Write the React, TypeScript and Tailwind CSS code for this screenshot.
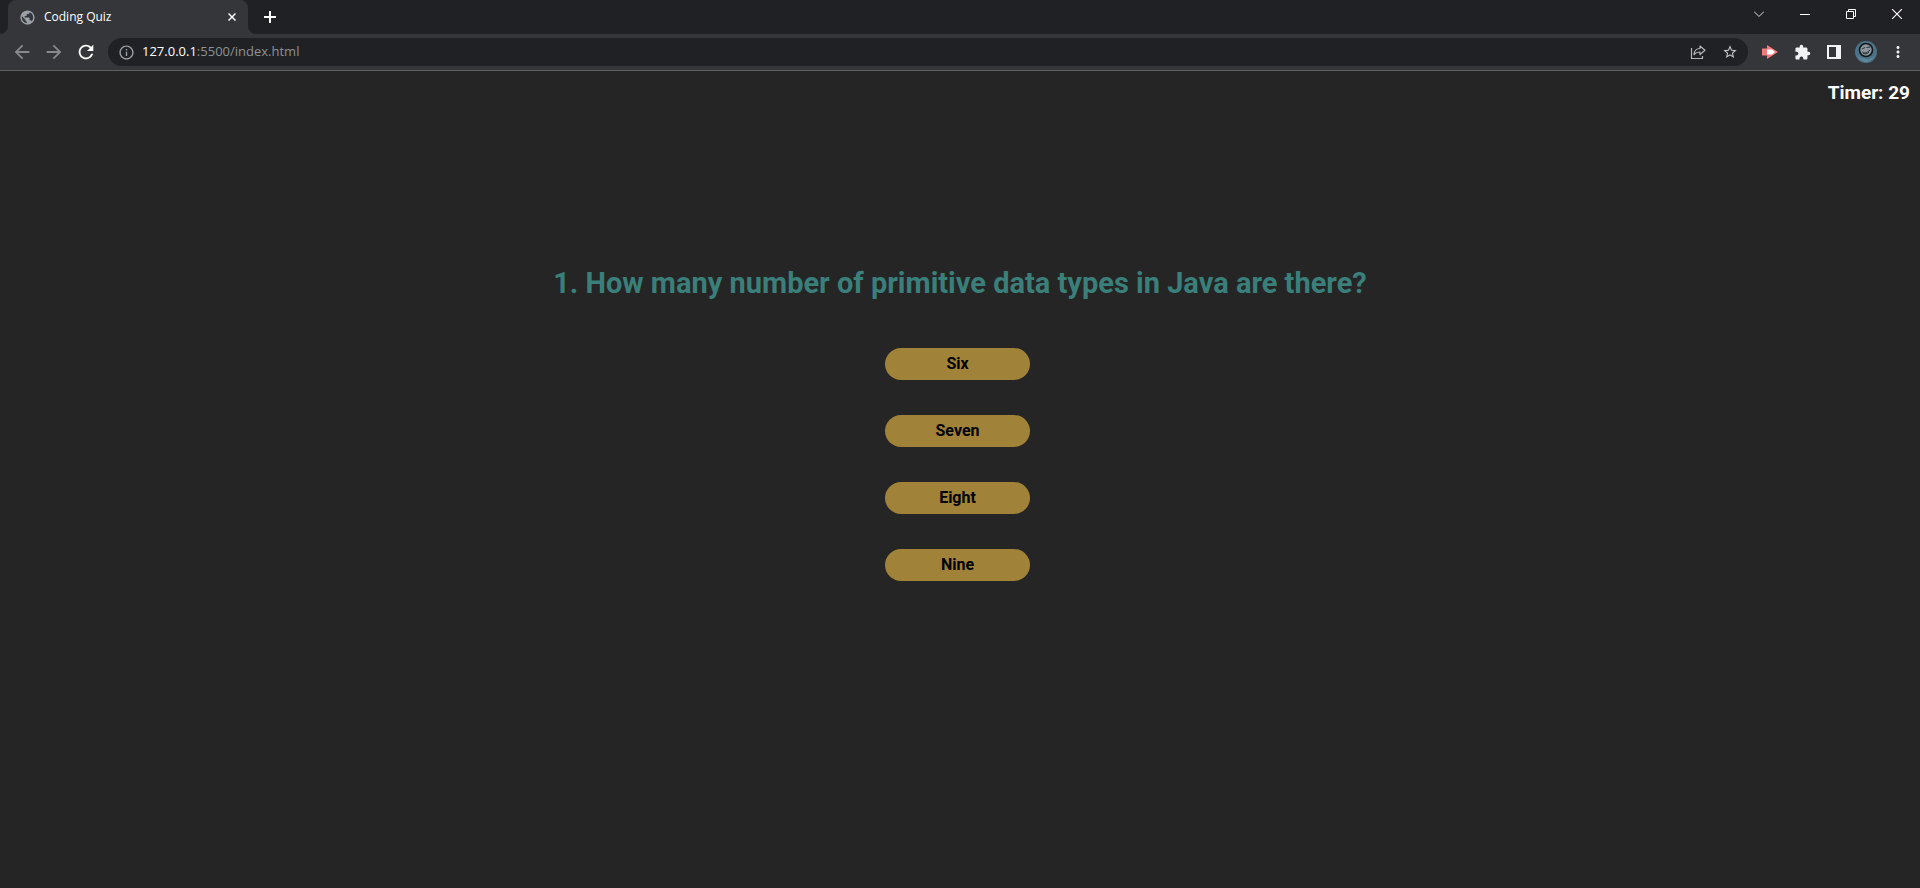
import type { ReactNode } from "react";
import {
  MdArrowBack,
  MdArrowForward,
  MdExtension,
  MdInfoOutline,
  MdMoreVert,
  MdPublic,
  MdRefresh,
  MdStarBorder,
} from "react-icons/md";

const question = "1. How many number of primitive data types in Java are there?";
const answers = ["Six", "Seven", "Eight", "Nine"];

type IconButtonProps = { label: string; className: string; children: ReactNode };

function IconButton({ label, className, children }: IconButtonProps) {
  return (
    <button type="button" aria-label={label} className={`flex shrink-0 items-center justify-center ${className}`}>
      {children}
    </button>
  );
}

function TabStrip() {
  return (
    <div className="flex h-[34px] bg-[#202124] pl-2">
      <div className="relative flex w-60 items-center rounded-t-lg bg-[#35363a] pr-2 pl-[11px]">
        <svg className="absolute bottom-0 -left-2 size-2" viewBox="0 0 8 8" aria-hidden="true">
          <path d="M8 0v8H0a8 8 0 0 0 8-8z" fill="#35363a" />
        </svg>
        <svg className="absolute -right-2 bottom-0 size-2" viewBox="0 0 8 8" aria-hidden="true">
          <path d="M0 0v8h8a8 8 0 0 1-8-8z" fill="#35363a" />
        </svg>
        <MdPublic size={17} color="#9aa0a6" />
        <span className="ml-2 flex-1 text-xs text-white">Coding Quiz</span>
        <IconButton label="Close tab" className="size-4">
          <svg width="8" height="8" viewBox="0 0 8 8" stroke="#fff" strokeWidth="1.5">
            <path d="M.5.5l7 7M7.5.5l-7 7" />
          </svg>
        </IconButton>
      </div>
      <IconButton label="New tab" className="ml-2 w-7">
        <svg width="12" height="12" viewBox="0 0 12 12" stroke="#fff" strokeWidth="2">
          <path d="M6 0v12M0 6h12" />
        </svg>
      </IconButton>
      <div className="ml-auto flex h-7">
        <IconButton label="Search tabs" className="w-[46px]">
          <svg width="10" height="6" viewBox="0 0 10 6" fill="none" stroke="#ddd">
            <path d="M0 .5l5 5 5-5" />
          </svg>
        </IconButton>
        <IconButton label="Minimize" className="w-[46px]">
          <svg width="10" height="2" viewBox="0 0 10 2">
            <path d="M0 1h10v1H0z" fill="#fff" />
          </svg>
        </IconButton>
        <IconButton label="Restore" className="w-[46px]">
          <svg width="10" height="10" viewBox="0 0 10 10" fill="none" stroke="#fff">
            <path d="M.5 2.5h7v7h-7zM2.5 2.500v-2h7v7h-2" />
          </svg>
        </IconButton>
        <IconButton label="Close" className="w-[46px]">
          <svg width="10" height="10" viewBox="0 0 10 10" stroke="#fff" strokeWidth="1.1">
            <path d="M0 0l10 10M10 0L0 10" />
          </svg>
        </IconButton>
      </div>
    </div>
  );
}

function Toolbar() {
  return (
    <div className="flex h-[37px] items-center border-b border-[#5f6063] bg-[#35363a] px-1.5">
      <IconButton label="Back" className="h-7 w-8">
        <MdArrowBack size={22} color="#87898c" />
      </IconButton>
      <IconButton label="Forward" className="h-7 w-8">
        <MdArrowForward size={22} color="#87898c" />
      </IconButton>
      <IconButton label="Reload" className="h-7 w-8">
        <MdRefresh size={22} color="#fff" />
      </IconButton>
      <div className="ml-1.5 flex h-7 flex-1 items-center rounded-full bg-[#202124] px-2.5">
        <MdInfoOutline size={17} color="#9aa0a6" />
        <a href="#page" className="ml-[7px] flex-1 text-[13px] text-[#8d9195]">
          <span className="text-white">127.0.0.1</span>:5500/index.html
        </a>
        <IconButton label="Share this page" className="mr-4 size-4">
          <svg width="16" height="16" viewBox="0 0 16 16" fill="none" stroke="#b4b6b9" strokeWidth="1.2">
            <path d="M1.500 4v10.500h11v-2.500" />
            <path d="M4 10.500c.4-4 2.700-6 6-6V2l5 4.200-5 4.300V8C7.500 8 5.500 8.800 4 10.500z" strokeLinejoin="round" />
          </svg>
        </IconButton>
        <IconButton label="Bookmark this page" className="size-4">
          <MdStarBorder size={18} color="#c8cacd" />
        </IconButton>
      </div>
      <IconButton label="Video extension" className="ml-1.5 size-8">
        <svg width="16" height="14" viewBox="0 0 16 14">
          <path d="M0 3.500h5V0l11 7-11 7v-3.500H0z" fill="#f57b7b" />
          <path d="M5 4.500h5L13 7l-3 2.500H5z" fill="#fff" />
        </svg>
      </IconButton>
      <IconButton label="Extensions" className="size-8">
        <MdExtension size={17} color="#f1f3f4" />
      </IconButton>
      <IconButton label="Side panel" className="size-8">
        <svg width="14" height="14" viewBox="0 0 14 14">
          <path d="M0 0h14v14H0zM2 2v10h7V2z" fill="#f1f3f4" fillRule="evenodd" />
        </svg>
      </IconButton>
      <IconButton label="Profile" className="size-8">
        <svg width="22" height="22" viewBox="0 0 22 22">
          <circle cx="11" cy="11" r="11" fill="#4c7388" />
          <path d="M2 14c3 4 6 3 9 4s5 0 8-3c-1 4-5 6-8 6s-7-2-9-7z" fill="#5f8699" />
          <circle cx="11" cy="9" r="6.500" fill="#8b979c" stroke="#10161a" strokeWidth="1.600" />
          <path d="M7 8l3-1.500M11.500 6.500L15 6M7 10.500c2 2.500 5 1.500 8-1.500M8 12c2 1.500 4 1 6-1" stroke="#273238" fill="none" />
        </svg>
      </IconButton>
      <IconButton label="Menu" className="size-8">
        <MdMoreVert size={18} color="#f1f3f4" />
      </IconButton>
    </div>
  );
}

function Quiz() {
  return (
    <main id="page" className="flex flex-1 flex-col font-['Roboto',Arial,sans-serif] font-bold">
      <p className="px-2.5 pt-2.5 text-right text-[19px] leading-6 text-white">Timer: 29</p>
      <h1 className="mt-40 px-4 text-center text-[29px] leading-9 text-[#3a7f7a]">{question}</h1>
      <div className="mt-[47px] mr-[5px] flex flex-col items-center gap-[35px]">
        {answers.map((answer) => (
          <button key={answer} type="button" className="h-8 w-[145px] rounded-full bg-[#a08238] text-base text-black">
            {answer}
          </button>
        ))}
      </div>
    </main>
  );
}

export default function App() {
  return (
    <div className="flex min-h-screen flex-col bg-[#252525] font-['Open_Sans','Segoe_UI',sans-serif]">
      <header>
        <TabStrip />
        <Toolbar />
      </header>
      <Quiz />
    </div>
  );
}
